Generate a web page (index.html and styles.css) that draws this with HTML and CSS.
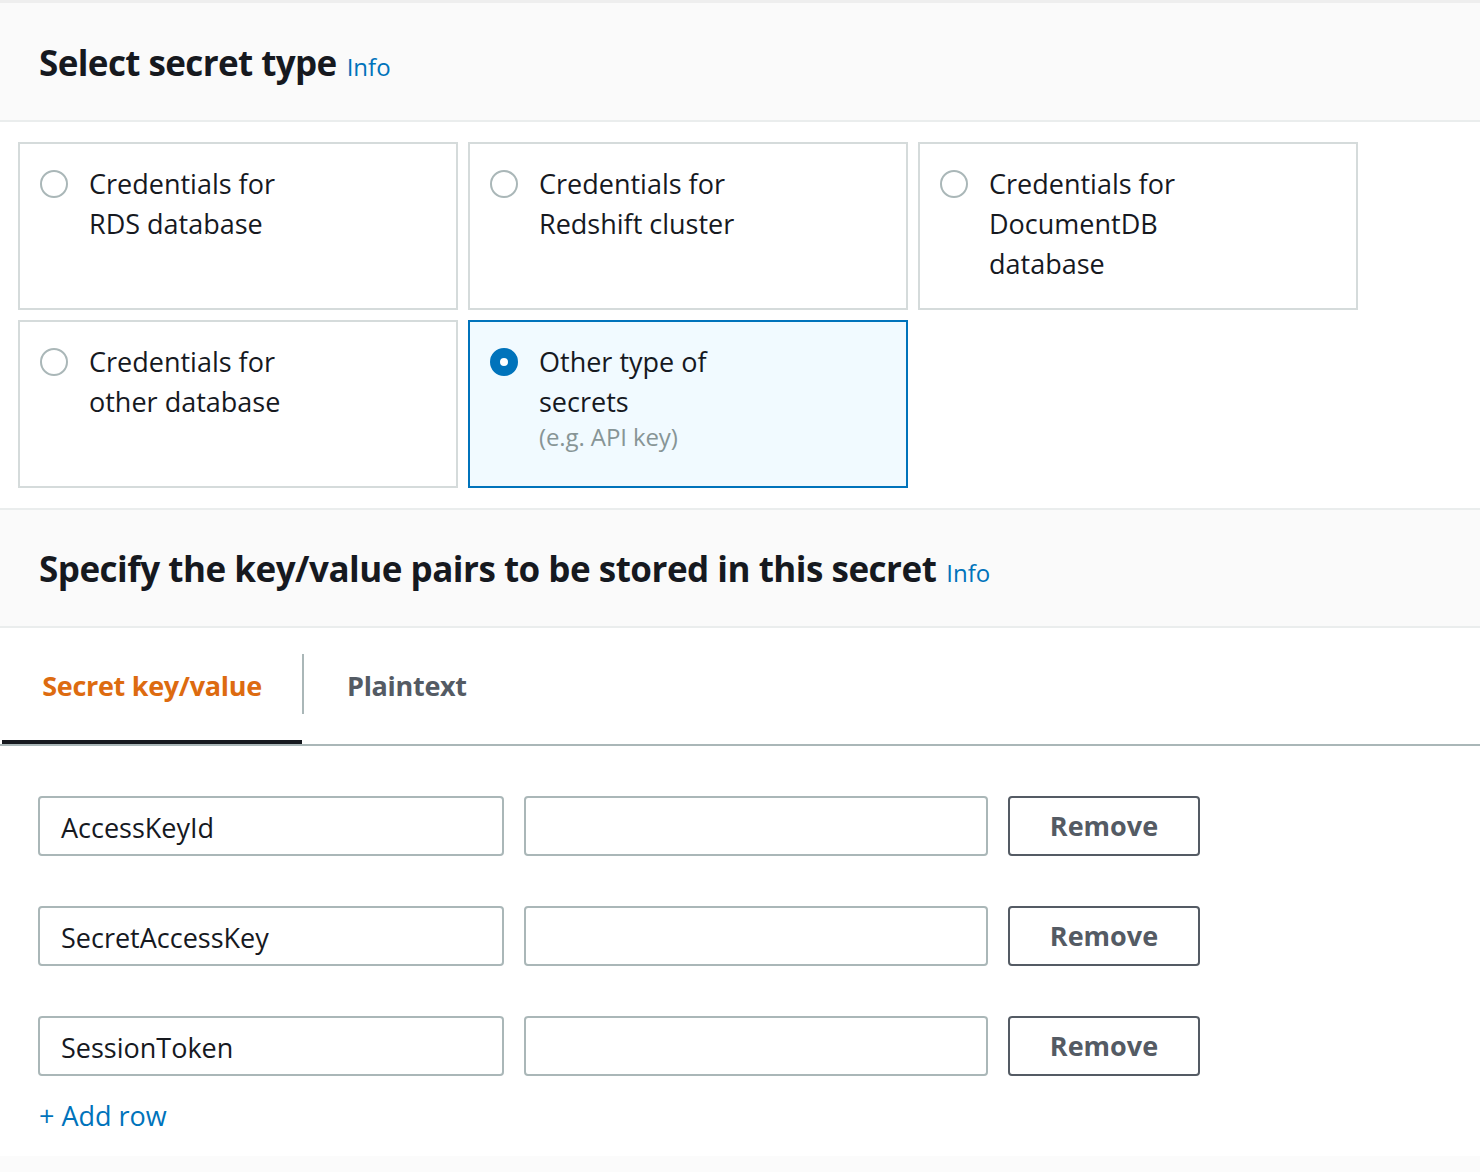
FILE: index.html
```html
<!DOCTYPE html>
<html lang="en">
<head>
<meta charset="utf-8">
<title>Store a new secret</title>
<link rel="stylesheet" href="styles.css">
</head>
<body>
<div class="page">
  <section class="panel">
    <header class="panel-header panel-header--first">
      <h2 class="panel-title">Select secret type</h2>
      <a class="info-link" href="#">Info</a>
    </header>
    <div class="type-grid">
      <label class="type-card">
        <span class="radio"></span>
        <span class="type-text">Credentials for<br>RDS database</span>
      </label>
      <label class="type-card">
        <span class="radio"></span>
        <span class="type-text">Credentials for<br>Redshift cluster</span>
      </label>
      <label class="type-card">
        <span class="radio"></span>
        <span class="type-text">Credentials for<br>DocumentDB<br>database</span>
      </label>
      <label class="type-card">
        <span class="radio"></span>
        <span class="type-text">Credentials for<br>other database</span>
      </label>
      <label class="type-card type-card--selected">
        <span class="radio radio--checked"></span>
        <span class="type-text">Other type of<br>secrets
          <span class="type-desc">(e.g. API key)</span>
        </span>
      </label>
    </div>
  </section>

  <section class="panel">
    <header class="panel-header panel-header--second">
      <h2 class="panel-title panel-title--long">Specify the key/value pairs to be stored in this secret</h2>
      <a class="info-link" href="#">Info</a>
    </header>
    <div class="tabs">
      <div class="tab tab--active">Secret key/value</div>
      <div class="tab-divider"></div>
      <div class="tab">Plaintext</div>
    </div>
    <div class="kv">
      <div class="kv-row">
        <div class="field field--key">AccessKeyId</div>
        <div class="field field--value"></div>
        <button class="btn-remove" type="button">Remove</button>
      </div>
      <div class="kv-row">
        <div class="field field--key">SecretAccessKey</div>
        <div class="field field--value"></div>
        <button class="btn-remove" type="button">Remove</button>
      </div>
      <div class="kv-row">
        <div class="field field--key">SessionToken</div>
        <div class="field field--value"></div>
        <button class="btn-remove" type="button">Remove</button>
      </div>
      <a class="add-row" href="#">+ Add row</a>
    </div>
    <div class="footer"></div>
  </section>
</div>
</body>
</html>
```

FILE: styles.css
```css
* {
  box-sizing: border-box;
}

html, body {
  margin: 0;
  padding: 0;
  background: #ffffff;
}

body {
  font-family: "Open Sans", "Noto Sans", Arial, sans-serif;
  color: #16191f;
  font-size: 27px;
  line-height: 40px;
}

.page {
  width: 1480px;
  height: 1172px;
  overflow: hidden;
}

.panel-header {
  display: flex;
  align-items: baseline;
  gap: 10px;
  height: 120px;
  padding: 0 39px;
  background: #fafafa;
  border-top: 2px solid #eaeded;
  border-bottom: 2px solid #eaeded;
}

.panel-header--first {
  height: 122px;
  border-top: 3px solid #eeeeee;
  padding-top: 36px;
}

.panel-header--second {
  padding-top: 35px;
}

.panel-title {
  margin: 0;
  font-size: 35px;
  line-height: 48px;
  font-weight: 700;
  letter-spacing: -0.6px;
  color: #16191f;
}

.panel-title--long {
  letter-spacing: -0.5px;
}

.info-link {
  font-size: 24px;
  color: #0073bb;
  text-decoration: none;
}

.type-grid {
  display: grid;
  grid-template-columns: repeat(3, 440px);
  grid-auto-rows: 168px;
  gap: 10px;
  padding: 20px 18px;
}

.type-card {
  display: flex;
  align-items: flex-start;
  gap: 21px;
  padding: 20px 20px 20px;
  border: 2px solid #d5dbdb;
  background: #ffffff;
}

.type-card--selected {
  border-color: #0073bb;
  background: #f1faff;
}

.radio {
  flex: none;
  width: 28px;
  height: 28px;
  margin-top: 6px;
  border-radius: 50%;
  border: 2px solid #aab7b8;
  background: #ffffff;
}

.radio--checked {
  border: 10px solid #0073bb;
}

.type-text {
  display: block;
  font-size: 27px;
  line-height: 40px;
}

.type-desc {
  display: block;
  font-size: 24px;
  line-height: 32px;
  margin-top: -1px;
  letter-spacing: -0.1px;
  color: #879596;
}

.tabs {
  display: flex;
  align-items: center;
  padding-left: 2px;
  border-bottom: 2px solid #aab7b8;
}

.tab {
  height: 116px;
  display: flex;
  align-items: center;
  padding: 4px 43px 0;
  font-size: 27px;
  font-weight: 700;
  letter-spacing: -0.3px;
  color: #545b64;
  border-bottom: 4px solid transparent;
}

.tab--active {
  width: 300px;
  justify-content: center;
  padding: 4px 0 0;
  color: #dd6b10;
  border-bottom-color: #16191f;
}

.tab-divider {
  width: 2px;
  height: 60px;
  margin-top: -4px;
  background: #aab7b8;
}

.kv {
  display: flex;
  flex-direction: column;
  align-items: flex-start;
  gap: 50px;
  padding: 50px 38px 0;
}

.kv-row {
  display: flex;
  gap: 20px;
}

.field {
  height: 60px;
  display: flex;
  align-items: center;
  padding: 3px 21px 0;
  border: 2px solid #aab7b8;
  border-radius: 4px;
  background: #ffffff;
  font-size: 27px;
  color: #16191f;
}

.field--key {
  width: 466px;
}

.field--value {
  width: 464px;
}

.btn-remove {
  width: 192px;
  height: 60px;
  border: 2px solid #545b64;
  border-radius: 4px;
  background: #ffffff;
  font-family: inherit;
  font-size: 27px;
  font-weight: 700;
  color: #545b64;
  padding: 0 0 2px;
}

.add-row {
  margin-top: -30px;
  margin-left: 1px;
  font-size: 27px;
  line-height: 40px;
  color: #0073bb;
  text-decoration: none;
}

.footer {
  height: 40px;
  margin-top: 20px;
  background: #fbfbfb;
}
```
